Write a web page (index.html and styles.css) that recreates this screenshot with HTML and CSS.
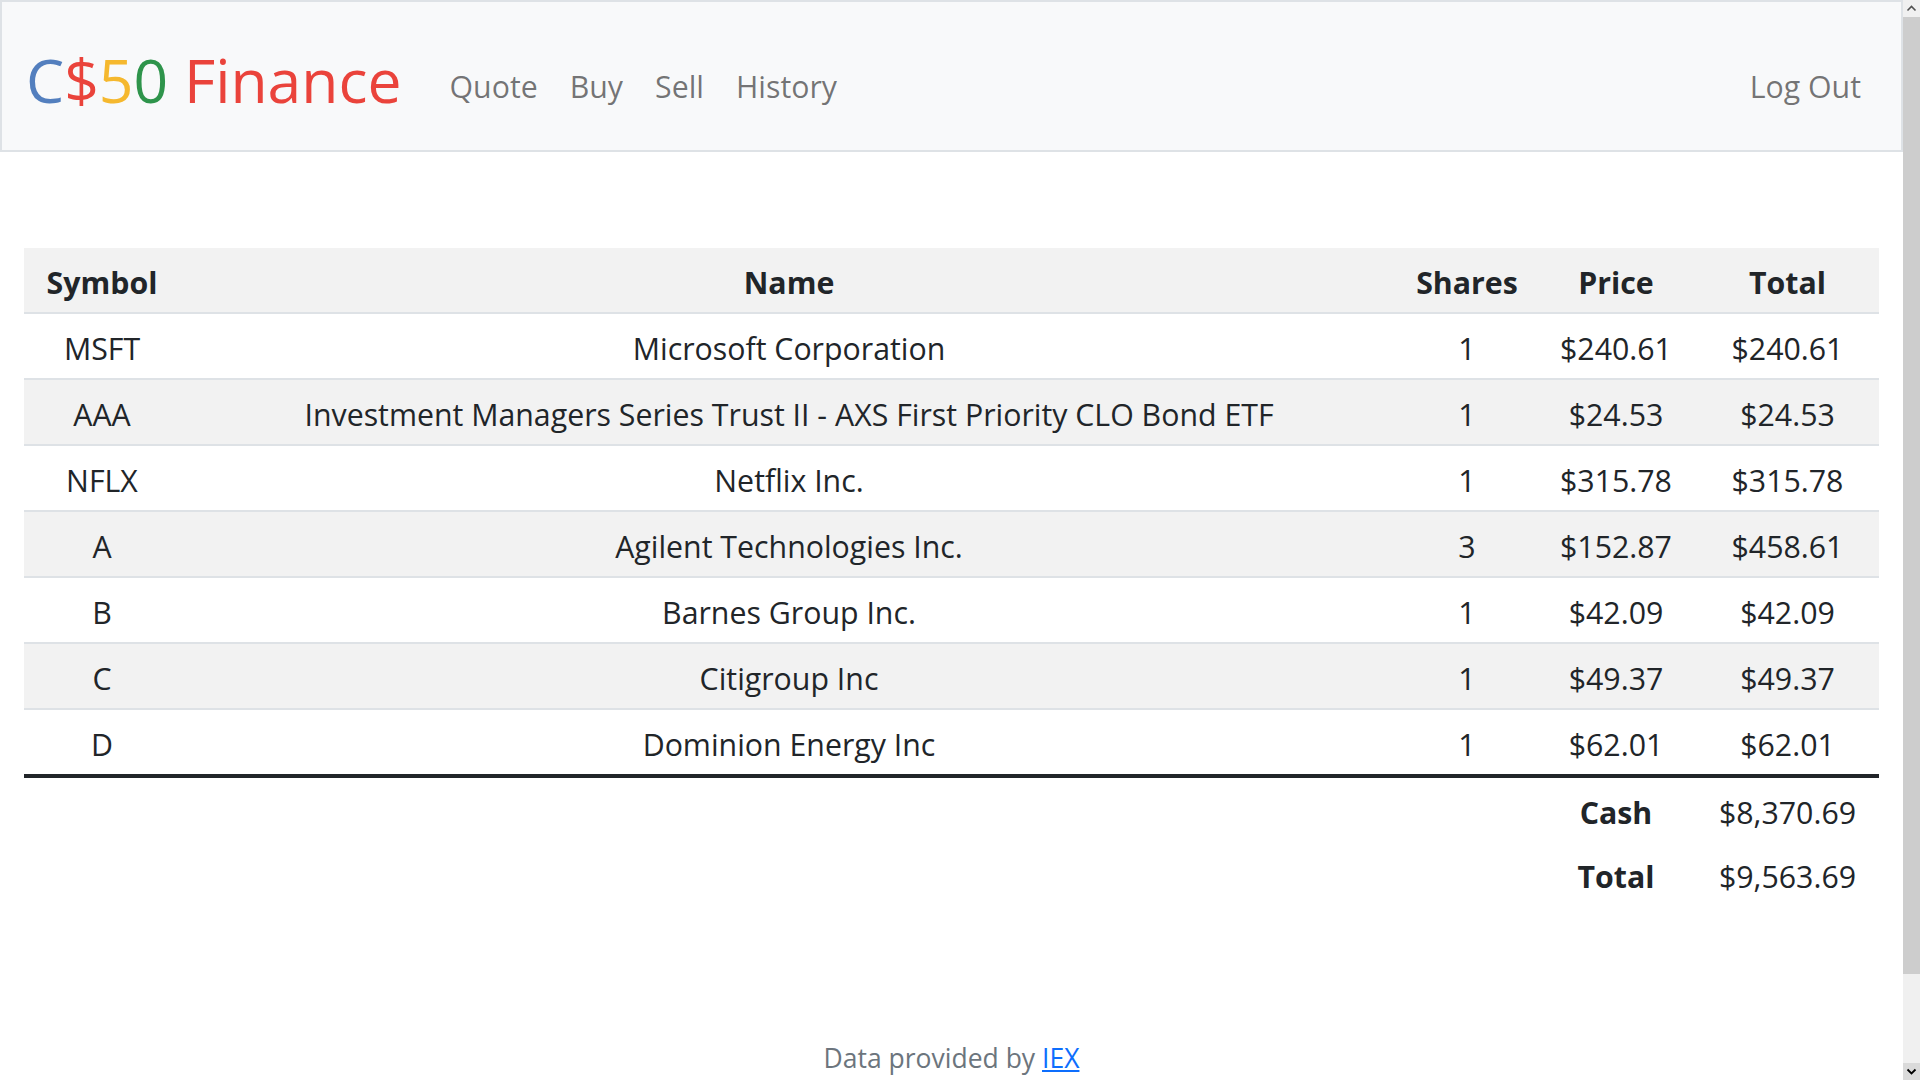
FILE: index.html
```html
<!DOCTYPE html>
<html lang="en">
<head>
<meta charset="utf-8">
<title>C$50 Finance: Portfolio</title>
<link rel="stylesheet" href="styles.css">
</head>
<body>
<nav class="navbar">
  <div class="nav-inner">
    <a class="brand" href="#"><span class="blue">C</span><span class="red">$</span><span class="yellow">5</span><span class="green">0</span> <span class="red">Finance</span></a>
    <ul class="nav-list nav-left">
      <li><a class="nav-link" href="#">Quote</a></li>
      <li><a class="nav-link" href="#">Buy</a></li>
      <li><a class="nav-link" href="#">Sell</a></li>
      <li><a class="nav-link" href="#">History</a></li>
    </ul>
    <ul class="nav-list nav-right">
      <li><a class="nav-link" href="#">Log Out</a></li>
    </ul>
  </div>
</nav>
<main class="main">
  <table class="portfolio">
    <colgroup>
      <col class="c-symbol"><col class="c-name"><col class="c-shares"><col class="c-price"><col class="c-total">
    </colgroup>
    <tbody>
      <tr class="head-row"><th>Symbol</th><th>Name</th><th>Shares</th><th>Price</th><th>Total</th></tr>
      <tr><td>MSFT</td><td>Microsoft Corporation</td><td>1</td><td>$240.61</td><td>$240.61</td></tr>
      <tr><td>AAA</td><td>Investment Managers Series Trust II - AXS First Priority CLO Bond ETF</td><td>1</td><td>$24.53</td><td>$24.53</td></tr>
      <tr><td>NFLX</td><td>Netflix Inc.</td><td>1</td><td>$315.78</td><td>$315.78</td></tr>
      <tr><td>A</td><td>Agilent Technologies Inc.</td><td>3</td><td>$152.87</td><td>$458.61</td></tr>
      <tr><td>B</td><td>Barnes Group Inc.</td><td>1</td><td>$42.09</td><td>$42.09</td></tr>
      <tr><td>C</td><td>Citigroup Inc</td><td>1</td><td>$49.37</td><td>$49.37</td></tr>
      <tr class="last-row"><td>D</td><td>Dominion Energy Inc</td><td>1</td><td>$62.01</td><td>$62.01</td></tr>
    </tbody>
    <tfoot>
      <tr><td></td><td></td><td></td><td class="bold">Cash</td><td>$8,370.69</td></tr>
      <tr><td></td><td></td><td></td><td class="bold">Total</td><td>$9,563.69</td></tr>
    </tfoot>
  </table>
</main>
<footer class="footer">Data provided by <a href="#">IEX</a></footer>
<div class="scrollbar" aria-hidden="true">
  <div class="sb-btn sb-up"><svg width="17" height="17" viewBox="0 0 17 17"><path d="M4.5 10.5 L8.5 6.5 L12.5 10.5" fill="none" stroke="#505050" stroke-width="1.6"/></svg></div>
  <div class="sb-thumb"></div>
  <div class="sb-track"></div>
  <div class="sb-btn sb-down"><svg width="17" height="17" viewBox="0 0 17 17"><path d="M4.5 6.5 L8.5 10.5 L12.5 6.5" fill="none" stroke="#000" stroke-width="1.8"/></svg></div>
</div>
</body>
</html>
```
FILE: styles.css
```css
body {
  margin: 0 17px 0 0;
  font-family: "Open Sans", "Noto Sans", sans-serif;
  font-size: 30.3px;
  line-height: 48px;
  color: #212529;
  background: #fff;
}
.navbar {
  background: #f8f9fa;
  border: 2px solid #dee2e6;
  padding: 16px 0;
}
.nav-inner {
  display: flex;
  align-items: center;
  padding: 0 24px;
}
.brand {
  font-size: 60.6px;
  line-height: 96px;
  padding: 14px 0 6px;
  margin-right: 32px;
  text-decoration: none;
  white-space: nowrap;
}
.blue { color: #537fbe; }
.red { color: #ea433b; }
.yellow { color: #f5b82e; }
.green { color: #2e944b; }
.nav-list {
  list-style: none;
  margin: 16px 0 0;
  padding: 0;
  display: flex;
}
.nav-right {
  margin-left: auto;
}
.nav-link {
  display: block;
  padding: 19px 16px 13px;
  color: rgba(0, 0, 0, 0.55);
  text-decoration: none;
}
.main {
  padding: 96px 24px;
  text-align: center;
}
.portfolio {
  width: 100%;
  table-layout: fixed;
  border-collapse: collapse;
  margin-bottom: 32px;
}
.c-symbol { width: 156px; }
.c-shares { width: 138px; }
.c-price { width: 160px; }
.c-total { width: 183px; }
.portfolio th,
.portfolio td {
  padding: 11px 8px 5px;
  text-align: center;
  white-space: nowrap;
}
.portfolio tbody th,
.portfolio tbody td {
  border-bottom: 2px solid #dee2e6;
}
.portfolio th {
  font-weight: 700;
}
.portfolio tbody tr:nth-child(odd) {
  background: #f2f2f2;
}
.portfolio tbody .last-row td {
  border-bottom: 4px solid #212529;
}
.portfolio tfoot td {
  border: 0;
}
.bold {
  font-weight: 700;
}
.footer {
  text-align: center;
  font-size: 26.5px;
  line-height: 42px;
  padding-top: 3px;
  color: #6c757d;
  margin-bottom: 96px;
}
.footer a {
  color: #0d6efd;
}
.scrollbar {
  position: fixed;
  top: 0;
  right: 0;
  width: 17px;
  height: 100vh;
  display: flex;
  flex-direction: column;
  background: #f0f0f0;
}
.sb-btn {
  height: 17px;
  flex: none;
  background: #f0f0f0;
}
.sb-btn svg {
  display: block;
}
.sb-down {
  background: #dadada;
}
.sb-thumb {
  height: 957px;
  flex: none;
  background: #cdcdcd;
}
.sb-track {
  flex: 1;
}
```
